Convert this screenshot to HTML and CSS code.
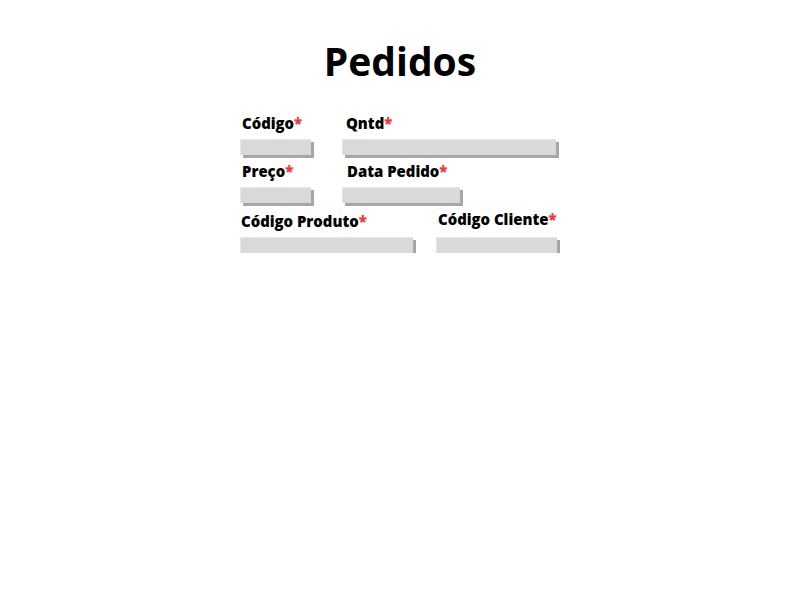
FILE: index.html
```html
<!DOCTYPE html>
<html lang="pt">
<head>
<meta charset="utf-8">
<title>Pedidos</title>
<link rel="stylesheet" href="styles.css">
</head>
<body>
<main class="page">
  <h1 class="title">Pedidos</h1>
  <form class="form">
    <div class="row row-1">
      <div class="field f-codigo">
        <label class="label">Código<span class="req">*</span></label>
        <div class="input"></div>
      </div>
      <div class="field f-qntd">
        <label class="label">Qntd<span class="req">*</span></label>
        <div class="input"></div>
      </div>
    </div>
    <div class="row row-2">
      <div class="field f-preco">
        <label class="label">Preço<span class="req">*</span></label>
        <div class="input"></div>
      </div>
      <div class="field f-data">
        <label class="label">Data Pedido<span class="req">*</span></label>
        <div class="input"></div>
      </div>
    </div>
    <div class="row row-3">
      <div class="field f-produto">
        <label class="label">Código Produto<span class="req">*</span></label>
        <div class="input"></div>
      </div>
      <div class="field f-cliente">
        <label class="label">Código Cliente<span class="req">*</span></label>
        <div class="input"></div>
      </div>
    </div>
  </form>
</main>
</body>
</html>
```

FILE: styles.css
```css
html, body {
  margin: 0;
  padding: 0;
  background: #ffffff;
}

body {
  font-family: "Open Sans", "Liberation Sans", sans-serif;
  color: #000000;
}

.page {
  width: 320px;
  margin: 0 auto;
  padding-top: 34px;
  display: flex;
  flex-direction: column;
}

.title {
  margin: 0;
  font-size: 39px;
  font-weight: 700;
  line-height: 54px;
  text-align: center;
}

.form {
  margin-top: 25px;
  display: flex;
  flex-direction: column;
  gap: 5px;
}

.row {
  display: flex;
  align-items: flex-start;
}

.field {
  display: flex;
  flex-direction: column;
  gap: 6px;
}

.label {
  font-size: 14.9px;
  font-weight: 800;
  line-height: 20px;
  padding-left: 2px;
  white-space: nowrap;
}

.req {
  color: #ff3333;
}

.input {
  height: 16px;
  background: #d9d9d9;
  border-top: 1px solid #e6e6e6;
  border-left: 1px solid #e6e6e6;
  box-sizing: border-box;
  box-shadow: 3px 3px 0 #a6a6a6;
}

.f-codigo, .f-preco { width: 71px; }
.f-qntd { width: 214px; margin-left: 31px; }
.f-qntd .label { padding-left: 4px; }
.f-data { width: 118px; margin-left: 31px; }
.f-data .label { padding-left: 5px; }

.row-2 { margin-top: 1px; }

.row-3 { margin-top: 1px; }
.f-produto { width: 173px; margin-top: 2px; }
.f-produto .label { padding-left: 1px; }
.f-cliente { width: 121px; margin-left: 23px; gap: 7px; }
.f-cliente .label { padding-left: 2px; }
.f-cliente .input { margin-top: 1px; }
```
